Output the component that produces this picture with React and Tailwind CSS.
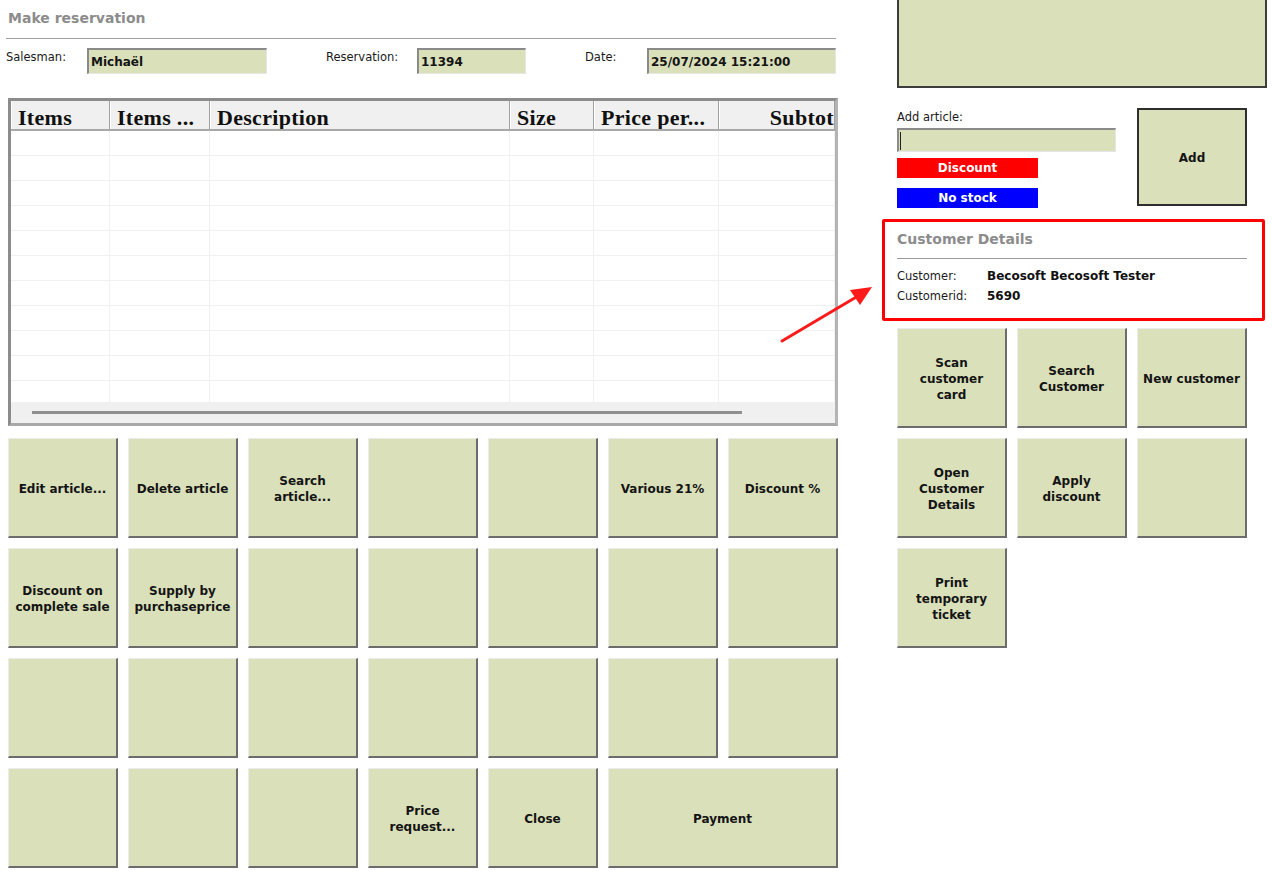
import React from 'react';

const Btn = ({ lines = [], className = '' }) => (
  <button
    type="button"
    className={`flex flex-col items-center justify-center border-t border-l border-[#ececec] border-r-2 border-b-2 border-r-[#6c6c6c] border-b-[#6c6c6c] bg-[#dae0ba] px-[2px] pt-[3px] text-center text-[12px] font-bold leading-[16px] text-[#141414] whitespace-nowrap ${className}`}
  >
    {lines.map((line) => (
      <span key={line}>{line}</span>
    ))}
  </button>
);

const Field = ({ value, width }) => (
  <div className={`flex h-[26px] items-center border-t-2 border-l-2 border-[#8a8a8a] border-r border-b border-r-[#e6e6e6] border-b-[#e6e6e6] bg-[#dae0ba] pl-[2px] text-[12px] font-bold text-[#141414] ${width}`}>
    {value}
  </div>
);

const columns = [
  { label: 'Items', width: 'w-[99px]' },
  { label: 'Items ...', width: 'w-[100px]' },
  { label: 'Description', width: 'w-[300px]' },
  { label: 'Size', width: 'w-[84px]' },
  { label: 'Price per...', width: 'w-[125px]' },
  { label: 'Subtot', width: 'w-[116px]', right: true },
];

const mainButtons = [
  ['Edit article...'], ['Delete article'], ['Search', 'article...'], [], [], ['Various 21%'], ['Discount %'],
  ['Discount on', 'complete sale'], ['Supply by', 'purchaseprice'], [], [], [], [], [],
  [], [], [], [], [], [], [],
  [], [], [], ['Price', 'request...'], ['Close'],
];

const sideButtons = [
  ['Scan', 'customer', 'card'], ['Search', 'Customer'], ['New customer'],
  ['Open', 'Customer', 'Details'], ['Apply', 'discount'], [],
  ['Print', 'temporary', 'ticket'],
];

const rows = Array.from({ length: 11 });

export default function App() {
  return (
    <div className="relative flex h-[893px] w-[1272px] overflow-hidden bg-white font-['DejaVu_Sans',sans-serif] text-[#1a1a1a]">
      {/* left panel */}
      <div className="flex w-[838px] shrink-0 flex-col pl-[6px]">
        <div className="h-[39px] w-[830px] border-b border-[#a0a0a0] pl-[2px] pt-[8px] text-[14px] font-bold leading-[20px] text-[#8c8c8c]">
          Make reservation
        </div>

        <div className="mt-[9px] flex items-start">
          <div className="w-[81px] pt-[1px] text-[11.5px] leading-[16px]">Salesman:</div>
          <Field value="Michaël" width="w-[180px]" />
          <div className="ml-[59px] w-[91px] pt-[1px] text-[11.5px] leading-[16px]">Reservation:</div>
          <Field value="11394" width="w-[109px]" />
          <div className="ml-[59px] w-[62px] pt-[1px] text-[11.5px] leading-[16px]">Date:</div>
          <Field value="25/07/2024 15:21:00" width="w-[189px]" />
        </div>

        {/* grid */}
        <div className="ml-[2px] mt-[24px] flex h-[328px] w-[830px] flex-col overflow-hidden border-[3px] border-t-[#8c8c8c] border-l-[#8c8c8c] border-r-[#b4b4b4] border-b-[#a8a8a8]">
          <div className="flex h-[30px] shrink-0 border-b-2 border-[#a8a8a8] bg-[#f0f0f0]">
            {columns.map((col) => (
              <div
                key={col.label}
                className={`flex shrink-0 items-center overflow-hidden whitespace-nowrap border-r border-l border-r-[#a0a0a0] border-l-white pt-[4px] font-['Liberation_Serif',serif] text-[22px] font-bold tracking-[0.3px] text-[#111] ${col.width} ${col.right ? 'justify-end' : 'pl-[6px]'}`}
              >
                {col.label}
              </div>
            ))}
          </div>
          <div className="flex-1 overflow-hidden bg-white">
            {rows.map((_, i) => (
              <div key={i} className="flex h-[25px] border-b border-[#f0f0f0]">
                {columns.map((col) => (
                  <div key={col.label} className={`shrink-0 border-r border-[#f0f0f0] ${col.width}`} />
                ))}
              </div>
            ))}
          </div>
          <div className="flex h-[21px] shrink-0 items-center bg-[#f0f0f0] pl-[21px]">
            <div className="h-[3px] w-[710px] bg-[#8f8f8f]" />
          </div>
        </div>

        <div className="ml-[2px] mt-[12px] grid grid-cols-[repeat(7,110px)] grid-rows-[repeat(4,100px)] gap-[10px]">
          {mainButtons.map((lines, i) => (
            <Btn key={i} lines={lines} />
          ))}
          <Btn lines={['Payment']} className="col-span-2" />
        </div>
      </div>

      {/* right panel */}
      <div className="ml-[59px] flex w-[370px] shrink-0 flex-col">
        <div className="h-[88px] border-x-2 border-b-2 border-[#3c3c3c] bg-[#dae0ba]" />

        <div className="mt-[20px] flex items-start">
          <div className="flex w-[220px] flex-col">
            <div className="pt-[1px] text-[11.5px] leading-[16px]">Add article:</div>
            <div className="mt-[3px] flex h-[24px] w-[219px] items-center border-t-2 border-l-2 border-[#8a8a8a] border-r border-b border-r-[#e6e6e6] border-b-[#e6e6e6] bg-[#dae0ba] pl-[1px]">
              <span className="h-[18px] w-px bg-[#222]" />
            </div>
            <div className="mt-[6px] flex h-[20px] w-[141px] items-center justify-center bg-[#ff0000] text-[12px] font-bold text-white">
              Discount
            </div>
            <div className="mt-[10px] flex h-[20px] w-[141px] items-center justify-center bg-[#0000ff] text-[12px] font-bold text-white">
              No stock
            </div>
          </div>
          <button
            type="button"
            className="ml-[20px] flex h-[98px] w-[110px] items-center justify-center border-2 border-[#2e2e2e] bg-[#dae0ba] pt-[2px] text-[12px] font-bold text-[#141414]"
          >
            Add
          </button>
        </div>

        <div className="-ml-[15px] mt-[11px] w-[383px] rounded-[2px] border-[3px] border-[#ff0000] pb-[12px] pl-[12px] pt-[6px]">
          <div className="pt-[1px] text-[14px] font-bold leading-[20px] text-[#8c8c8c]">Customer Details</div>
          <div className="mt-[9px] w-[350px] border-t border-[#9a9a9a]" />
          <div className="mt-[7px] flex text-[11.5px] leading-[20px]">
            <div className="w-[90px]">Customer:</div>
            <div className="text-[12px] font-bold text-[#111]">Becosoft Becosoft Tester</div>
          </div>
          <div className="flex text-[11.5px] leading-[20px]">
            <div className="w-[90px]">Customerid:</div>
            <div className="text-[12px] font-bold text-[#111]">5690</div>
          </div>
        </div>

        <div className="mt-[7px] grid grid-cols-[repeat(3,110px)] grid-rows-[repeat(3,100px)] gap-[10px]">
          {sideButtons.map((lines, i) => (
            <Btn key={i} lines={lines} />
          ))}
        </div>
      </div>

      {/* annotation arrow */}
      <svg className="pointer-events-none absolute left-[770px] top-[275px]" width="110" height="80" viewBox="0 0 110 80" fill="none">
        <line x1="12" y1="66" x2="88" y2="21" stroke="#ff1a1a" strokeWidth="3" strokeLinecap="round" />
        <path d="M102 12 L80 15 L90 30 Z" fill="#ff1a1a" />
      </svg>
    </div>
  );
}
